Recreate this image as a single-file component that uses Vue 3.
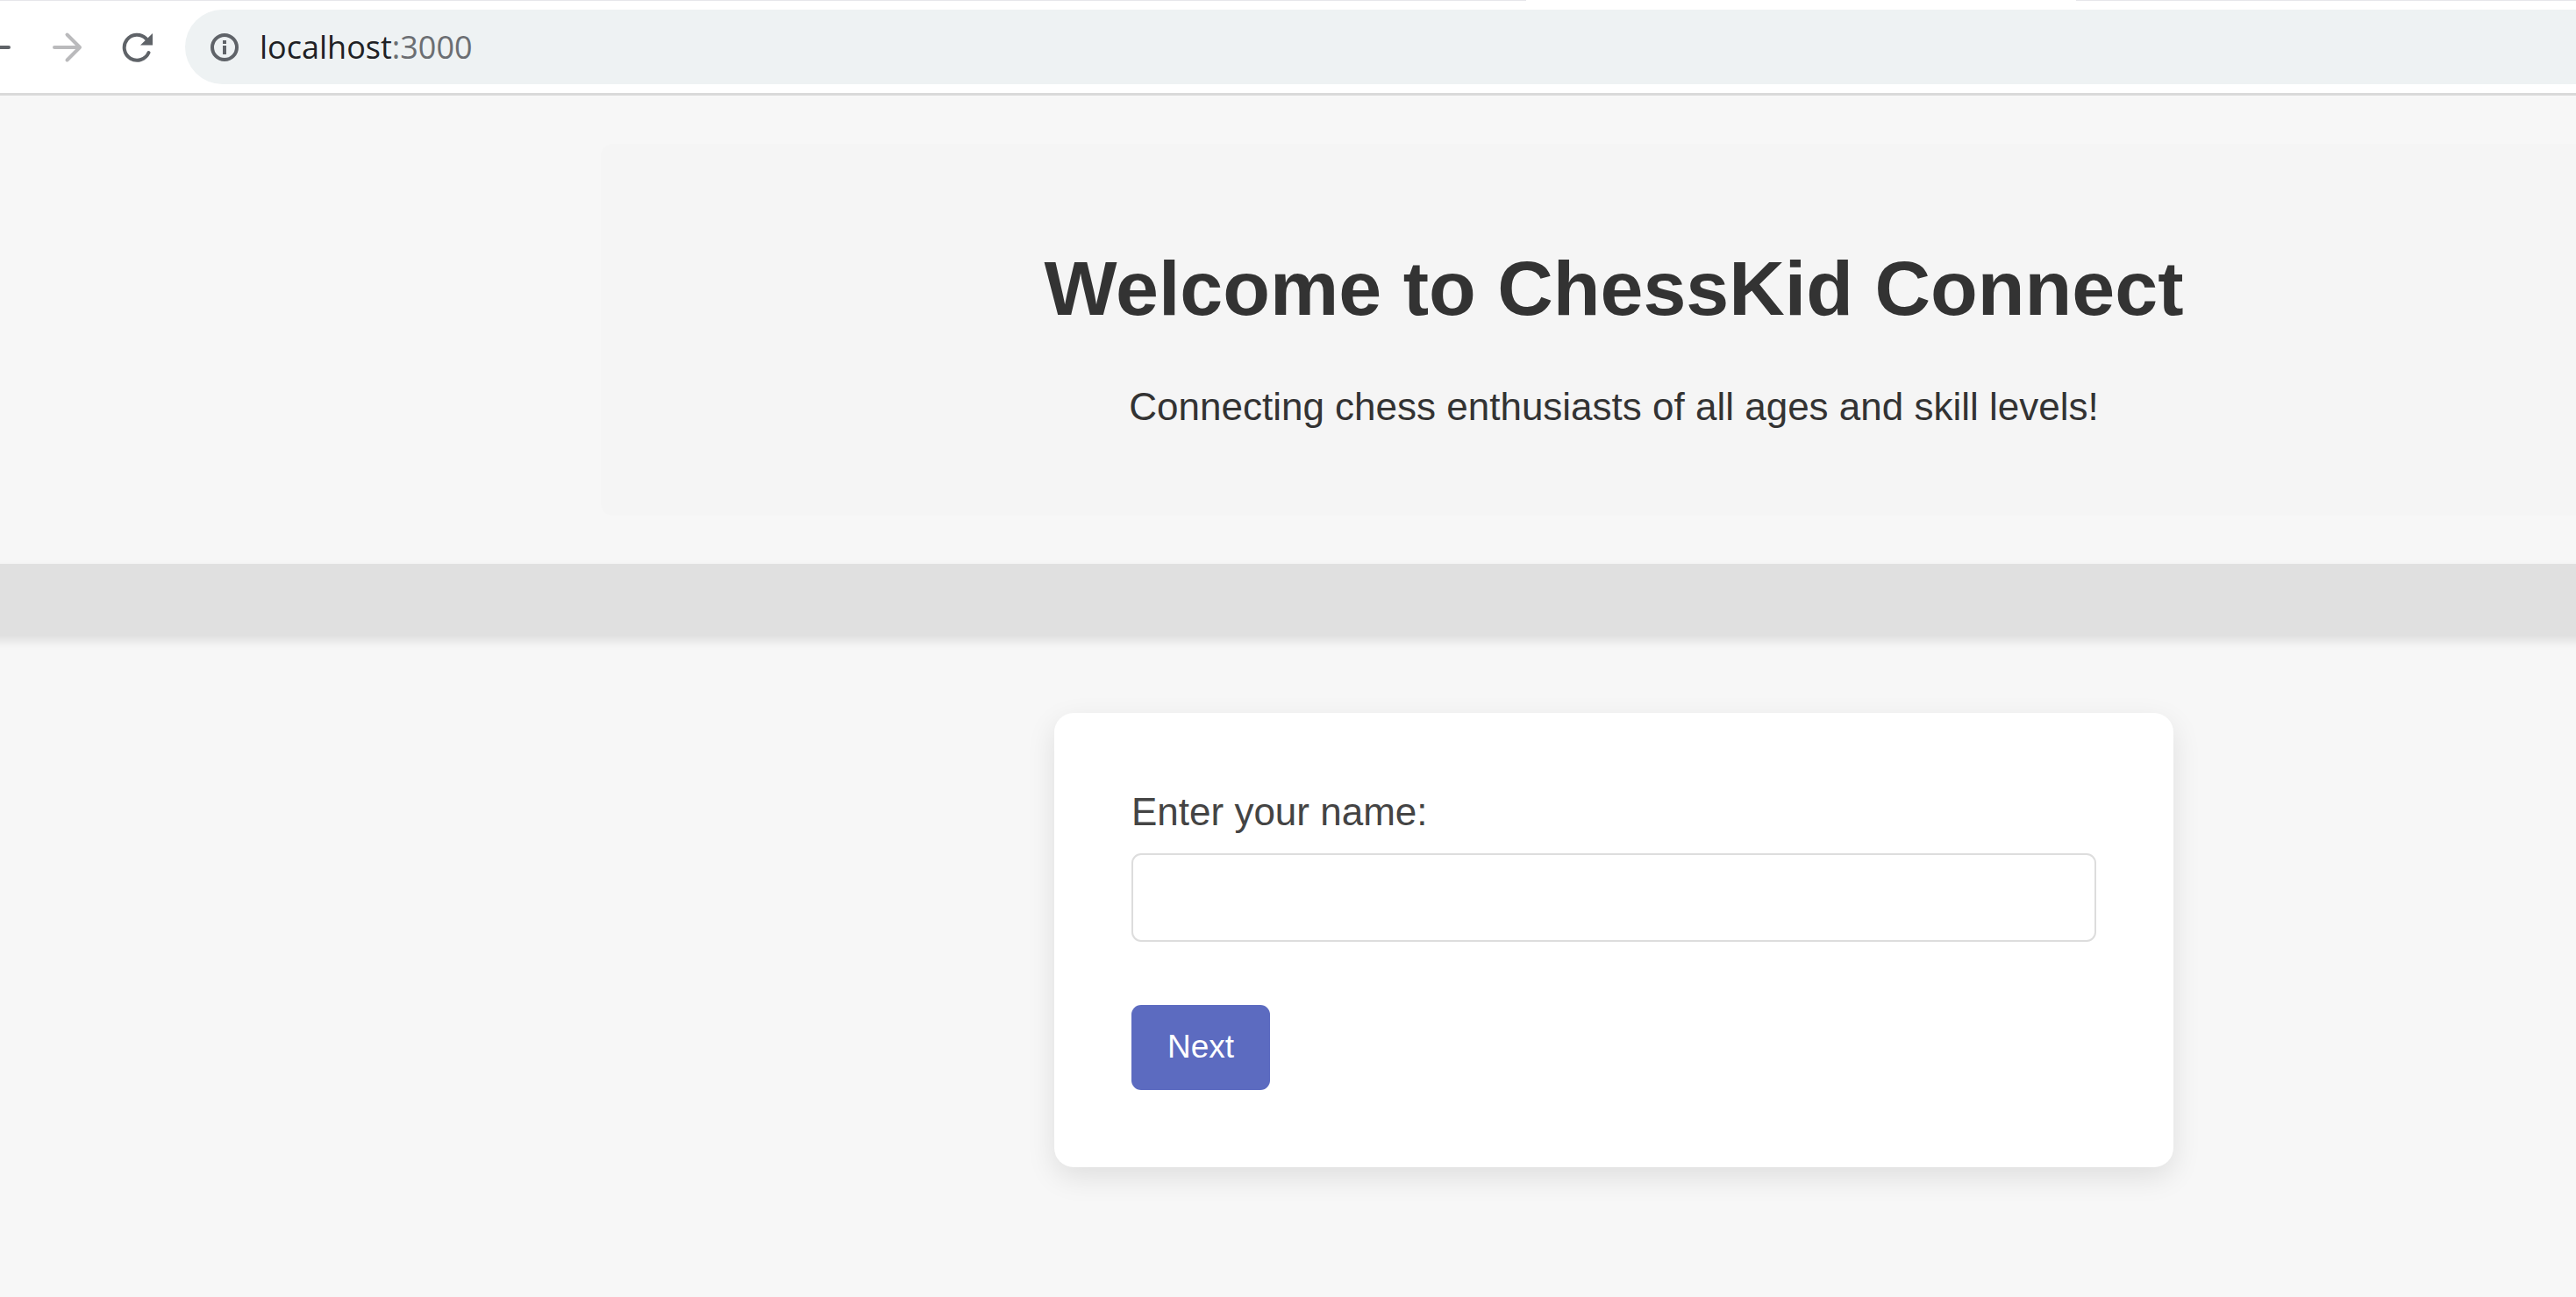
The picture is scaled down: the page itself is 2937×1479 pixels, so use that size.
<script setup>
import { ref } from 'vue'

const name = ref('')
</script>

<template>
  <div class="screen">
    <div class="browser-bar">
      <div class="tab-edge"><span></span><span></span></div>
      <nav class="toolbar" aria-label="Browser">
        <button class="tool back" type="button" aria-label="Back">
          <svg width="12" height="36" viewBox="0 0 12 36" fill="none" stroke="#5f6368" stroke-width="4" stroke-linecap="round">
            <path d="M-18 18H10" />
          </svg>
        </button>
        <button class="tool forward" type="button" aria-label="Forward">
          <svg width="36" height="36" viewBox="0 0 36 36" fill="none" stroke="#bababc" stroke-width="4" stroke-linecap="round" stroke-linejoin="round">
            <path d="M4 18H33M18.500 3.500L33 18L18.500 32.500" />
          </svg>
        </button>
        <button class="tool reload" type="button" aria-label="Reload">
          <svg width="36" height="36" viewBox="0 0 36 36">
            <path d="M31.500 24A14.500 14.500 0 1 1 28.500 8" fill="none" stroke="#5f6368" stroke-width="4" stroke-linecap="round" />
            <path d="M36 2V15.500H22Z" fill="#5f6368" />
          </svg>
        </button>
        <div class="address">
          <svg width="32" height="32" viewBox="0 0 32 32" aria-hidden="true">
            <circle cx="16" cy="16" r="14" fill="none" stroke="#5f6368" stroke-width="4" />
            <path d="M14 8H18V12H14ZM14 14H18V24H14Z" fill="#5f6368" />
          </svg>
          <span class="url">localhost<span class="port">:3000</span></span>
        </div>
      </nav>
    </div>

    <div class="page">
      <header class="hero">
        <h1>Welcome to ChessKid Connect</h1>
        <p>Connecting chess enthusiasts of all ages and skill levels!</p>
      </header>
      <div class="band"></div>
      <form class="card" @submit.prevent>
        <label for="name">Enter your name:</label>
        <input id="name" v-model="name" type="text" />
        <button class="next" type="submit">Next</button>
      </form>
    </div>
  </div>
</template>

<style>
body {
  margin: 0;
  background: #f7f7f7;
}
</style>

<style scoped>
.screen {
  min-height: 100vh;
  overflow: hidden;
  background: #f7f7f7;
  font-family: "Liberation Sans", Arial, sans-serif;
}

.browser-bar {
  background: #fff;
  border-bottom: 3px solid #dadada;
}

.tab-edge {
  display: flex;
  justify-content: space-between;
  height: 1px;
}

.tab-edge span {
  flex: 0 0 1740px;
  background: #e6e6ea;
}

.tab-edge span + span {
  flex-basis: 570px;
}

.toolbar {
  display: flex;
  align-items: center;
  padding: 10px 0;
}

.tool {
  display: flex;
  padding: 0;
  border: 0;
  background: none;
}

.forward {
  margin-left: 46px;
}

.reload {
  margin-left: 44px;
  margin-right: 37px;
}

.address {
  flex: 1;
  display: flex;
  align-items: center;
  gap: 24px;
  height: 85px;
  padding-left: 29px;
  border-radius: 43px 0 0 43px;
  background: #eef2f3;
}

.url {
  font: 36px/50px "Open Sans", "Noto Sans", sans-serif;
  color: #202124;
}

.port {
  color: #6b6e72;
}

/* The page is wider than the window and runs off both of its sides. */
.page {
  display: flex;
  flex-direction: column;
  align-items: center;
  margin: 0 -783px 0 -40px;
  padding: 55px 0 88px;
}

.hero {
  display: flex;
  flex-direction: column;
  gap: 60px;
  box-sizing: border-box;
  width: 100%;
  max-width: 2310px;
  margin-bottom: 55px;
  padding: 115px 55px 99px;
  border-radius: 14px;
  background: #f5f5f5;
  color: #333;
  text-align: center;
}

h1 {
  margin: 0;
  font-size: 88px;
  line-height: 100px;
}

p {
  margin: 0;
  font-size: 44px;
  line-height: 50px;
}

.band {
  align-self: stretch;
  height: 82px;
  margin-bottom: 88px;
  background: #e0e0e0;
  box-shadow: 0 6px 11px rgba(0, 0, 0, 0.1);
}

.card {
  display: flex;
  flex-direction: column;
  align-items: flex-start;
  box-sizing: border-box;
  width: 100%;
  max-width: 1276px;
  padding: 88px;
  border-radius: 22px;
  background: #fff;
  box-shadow: 0 11px 33px rgba(0, 0, 0, 0.1);
}

label {
  margin-bottom: 22px;
  font-size: 44px;
  line-height: 50px;
  color: #444;
}

input {
  box-sizing: border-box;
  width: 100%;
  height: 101px;
  margin-bottom: 72px;
  padding: 0 22px;
  border: 2px solid #ddd;
  border-radius: 11px;
  background: #fff;
  font: inherit;
  font-size: 37px;
  color: #333;
}

.next {
  height: 97px;
  padding: 0 41px 2px;
  border: 0;
  border-radius: 11px;
  background: #5c6bc0;
  font: inherit;
  font-size: 37px;
  color: #fff;
}
</style>
